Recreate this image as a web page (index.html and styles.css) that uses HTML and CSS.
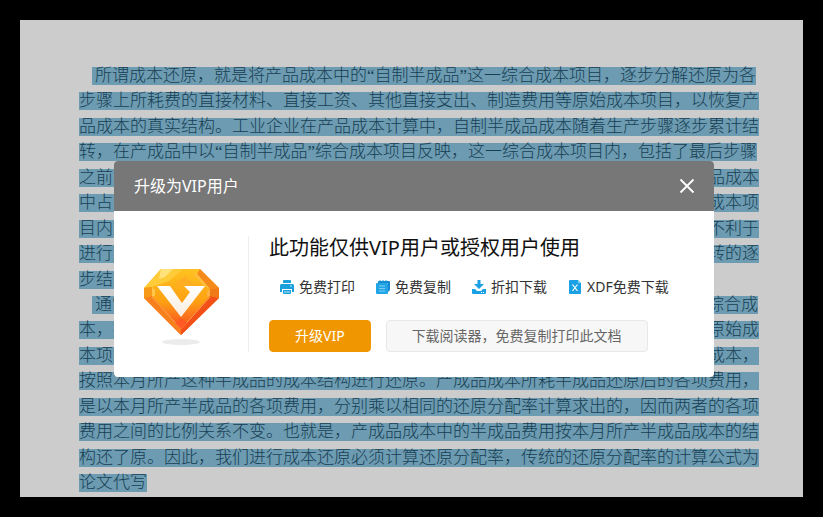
FILE: index.html
```
<!DOCTYPE html>
<html lang="zh-CN">
<head>
  <meta charset="UTF-8">
  <meta name="viewport" content="width=device-width, initial-scale=1">
  <title>升级为VIP用户</title>
  <link rel="stylesheet" href="styles.css">
</head>
<body>

  <main class="page">
    <p class="line indent">所谓成本还原，就是将产品成本中的“自制半成品”这一综合成本项目，逐步分解还原为各</p>
    <p class="line">步骤上所耗费的直接材料、直接工资、其他直接支出、制造费用等原始成本项目，以恢复产</p>
    <p class="line">品成本的真实结构。工业企业在产品成本计算中，自制半成品成本随着生产步骤逐步累计结</p>
    <p class="line">转，在产成品中以“自制半成品”综合成本项目反映，这一综合成本项目内，包括了最后步骤</p>
    <p class="line">之前的各个步骤所耗费的自制半成品成本，自制半成品在最后步骤产成品成本中的产品成本</p>
    <p class="line">中占有很大的比重，不能反映产品成本的原始构成，必须将其逐步分解还原为原始的成本项</p>
    <p class="line">目内的各项费用就不能真实反映产品成本的实际水平和构成情况，因而对企业来说很不利于</p>
    <p class="line">进行成本分析和考核，不利于成本管理工作。因此在采用综合结转时需要对按成本结转的逐</p>
    <p class="line">步结转分步法计算出的产成品成本进行还原。</p>
    <p class="line indent">通常采用的成本还原方法是，从最后一个步骤开始，将产成品成本中所耗半成品的综合成</p>
    <p class="line">本，按照上一步骤所产半成品的成本结构逐步进行分解，直到还原为最初投入的各个原始成</p>
    <p class="line">本项目为止，还原时应将产成品成本中所耗的半成品成本逐步分解为上步骤半成品的成本，</p>
    <p class="line">按照本月所产这种半成品的成本结构进行还原。产成品成本所耗半成品还原后的各项费用，</p>
    <p class="line">是以本月所产半成品的各项费用，分别乘以相同的还原分配率计算求出的，因而两者的各项</p>
    <p class="line">费用之间的比例关系不变。也就是，产成品成本中的半成品费用按本月所产半成品成本的结</p>
    <p class="line">构还了原。因此，我们进行成本还原必须计算还原分配率，传统的还原分配率的计算公式为</p>
    <p class="line">论文代写</p>
  </main>

  <div class="overlay">
    <section class="dialog" role="dialog" aria-labelledby="dialogTitle">
      <header class="dialog-header">
        <h1 id="dialogTitle">升级为VIP用户</h1>
        <button type="button" class="close" aria-label="关闭">
          <svg width="16" height="16" viewBox="0 0 16 16"><path d="M1.5 1.5l13 13M14.5 1.5l-13 13" stroke="#fff" stroke-width="1.8" fill="none"/></svg>
        </button>
      </header>

      <div class="dialog-body">
        <div class="badge">
          <svg width="76" height="78" viewBox="0 0 76 78">
            <defs>
              <linearGradient id="gem" x1="0" y1="0" x2="0" y2="1">
                <stop offset="0" stop-color="#ffc321"/>
                <stop offset=".5" stop-color="#fd9f12"/>
                <stop offset=".68" stop-color="#fb7a1c"/>
                <stop offset="1" stop-color="#f43c12"/>
              </linearGradient>
              <linearGradient id="vee" x1="0" y1="0" x2="0" y2="1">
                <stop offset="0" stop-color="#fff"/>
                <stop offset="1" stop-color="#f8ecdc"/>
              </linearGradient>
            </defs>
            <ellipse cx="38" cy="74" rx="19" ry="3" fill="#ececec"/>
            <path d="M18 1h39l19 19v10L38 67 1 30V20z" fill="url(#gem)"/>
            <path d="M18 1h22L26 13 9 19l-8 1z" fill="#ffcb38"/>
            <path d="M18 1h12l-8 8-6 2z" fill="#ffe27a"/>
            <path d="M57 1l19 19-9 1L54 6z" fill="#f58a1a"/>
            <path d="M54 6l13 15-6-3L50 5z" fill="#ffbe40"/>
            <path d="M42 8l10 10H36l-4-2z" fill="#ffad22"/>
            <path d="M1 20l8-1v10l-8 1z" fill="#f79a1a"/>
            <path d="M9 19l3 3v6l-3 1z" fill="#ffc64a"/>
            <path d="M76 20l-9 1v7l9 2z" fill="#f07a18"/>
            <path d="M67 21l-3 3v5l3-1z" fill="#ffb347"/>
            <path d="M1 30l8-2 29 33v6z" fill="#f8801c"/>
            <path d="M76 30l-9-2-29 33v6z" fill="#f25018"/>
            <path d="M9 29l29 32 29-32" fill="none" stroke="#ffa050" stroke-width="1"/>
            <path d="M38 50l6 5-6 6-6-6z" fill="#ff5a24"/>
            <path d="M14 18h13l12 17 8-11-6-6h21L38 49z" fill="url(#vee)"/>
          </svg>
        </div>

        <div class="content">
          <h2>此功能仅供VIP用户或授权用户使用</h2>

          <ul class="features">
            <li>
              <svg width="14" height="14" viewBox="0 0 14 14">
                <path d="M3 1q0-1 1-1h6q1 0 1 1v2H3zM1 4h12l1 1v7h-2V9H2v3H0V5z" fill="#1ba0dc"/>
                <path d="M3 10h8v3q0 1-1 1H4q-1 0-1-1z" fill="#1ba0dc"/>
                <path d="M10 6h2M4 12h6" stroke="#bfe6f7" stroke-width="1"/>
              </svg>
              免费打印
            </li>
            <li>
              <svg width="14" height="14" viewBox="0 0 14 14">
                <path d="M3 1h10q1 0 1 1v8l-2 2V3H2V2q0-1 1-1z" fill="#1687cc"/>
                <path d="M1 3h10q1 0 1 1v9q0 1-1 1H1q-1 0-1-1V4q0-1 1-1z" fill="#22a5e6"/>
                <path d="M3 6h6M3 8.500h6M3 11h6" stroke="#7dcdf2" stroke-width="1"/>
                <path d="M4 0v2M7 0v2M10 0v2" stroke="#22a5e6" stroke-width="1"/>
              </svg>
              免费复制
            </li>
            <li>
              <svg width="14" height="14" viewBox="0 0 14 14">
                <path d="M5.500 0h3v4H12L7 9 2 4h3.500z" fill="#1aa0e4"/>
                <path d="M0 9h3l2 2h4l2-2h3v4q0 1-1 1H1q-1 0-1-1z" fill="#1aa0e4"/>
                <path d="M9 12.500h1M11 12.500h1" stroke="#fff"/>
              </svg>
              折扣下载
            </li>
            <li>
              <svg width="14" height="14" viewBox="0 0 14 14">
                <path d="M2 0h8l3 3v10q0 1-1 1H2q-1 0-1-1V1q0-1 1-1z" fill="#1aa0e4"/>
                <path d="M10 0l3 3h-3z" fill="#8fd3f5"/>
                <path d="M4.500 4.500l5 6.500M9.500 4.500l-5 6.500" stroke="#fff" stroke-width="1.200"/>
              </svg>
              XDF免费下载
            </li>
          </ul>

          <div class="actions">
            <button type="button" class="btn primary">升级VIP</button>
            <button type="button" class="btn secondary">下载阅读器，免费复制打印此文档</button>
          </div>
        </div>
      </div>
    </section>
  </div>

</body>
</html>
```
FILE: styles.css
```
* {
  box-sizing: border-box;
}

body {
  margin: 0;
  min-height: 100vh;
  display: flex;
  padding: 20px;
  background: #000;
  font-family: "Noto Sans", "Noto Sans CJK SC", sans-serif;
}

/* document behind the dialog */
.page {
  flex: 1;
  display: flex;
  flex-direction: column;
  align-items: flex-start;
  justify-content: space-between;
  padding: 47px 46px 5px 59px;
  background: #ccc;
  overflow: hidden;
}

.line {
  margin: 0;
  font-family: "Liberation Serif", "Noto Sans CJK SC", serif;
  font-size: 17px;
  font-weight: 300;
  line-height: 18px;
  white-space: nowrap;
  color: #173f54;
  background: #6d9bb1;
}

.indent {
  margin-left: 13px;
  padding-left: 3px;
}

/* dialog */
.overlay {
  position: absolute;
  inset: 0;
  display: flex;
  justify-content: center;
  align-items: flex-start;
  padding: 161px 0 0 5px;
}

.dialog {
  width: 600px;
  border-radius: 4px;
  overflow: hidden;
  background: #fff;
}

.dialog-header {
  display: flex;
  align-items: center;
  justify-content: space-between;
  height: 50px;
  padding: 0 19px 0 20px;
  background: #777;
  color: #fff;
}

.dialog-header h1 {
  margin: 0;
  font-size: 16px;
  font-weight: 400;
  line-height: 24px;
}

.close {
  display: flex;
  padding: 0;
  border: 0;
  background: none;
  cursor: pointer;
}

.dialog-body {
  display: flex;
  padding: 25px 0;
}

.badge {
  flex: 0 0 135px;
  display: flex;
  justify-content: center;
  padding-top: 32px;
  border-right: 1px solid #eee;
}

.content {
  flex: 1;
  padding-left: 20px;
}

h2 {
  margin: 0;
  font-size: 20px;
  font-weight: 400;
  line-height: 24px;
  color: #111;
}

.features {
  display: flex;
  gap: 21px;
  margin: 16px 0 23px;
  padding: 0 0 0 11px;
  list-style: none;
}

.features li {
  display: flex;
  align-items: center;
  gap: 5px;
  font-size: 14px;
  line-height: 21px;
  white-space: nowrap;
  color: #333;
}

.actions {
  display: flex;
  gap: 15px;
}

.btn {
  height: 32px;
  padding: 0 25px;
  border: 1px solid #e8e8e8;
  border-radius: 4px;
  font-family: inherit;
  font-size: 14px;
  line-height: 20px;
  white-space: nowrap;
  cursor: pointer;
}

.primary {
  border-color: #f09600;
  background: #f09600;
  color: #fff;
}

.secondary {
  background: #f7f7f7;
  color: #666;
}
```
